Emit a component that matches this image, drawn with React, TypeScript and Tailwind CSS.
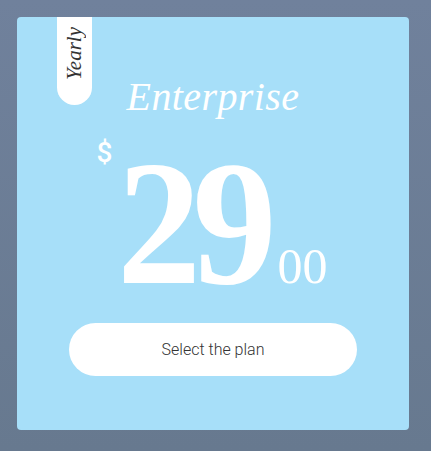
import React from "react";

export default function App() {
  return (
    <div className="w-[431px] h-[451px] overflow-hidden bg-gradient-to-b from-[#70819c] to-[#67798f] pt-[17px] pl-[17px]">
      <div className="relative w-[392px] h-[413px] rounded-[4px] bg-[#a7dff9] flex flex-col items-center">
        <div className="absolute left-[40px] top-0 w-[35px] h-[88px] bg-white rounded-b-full flex items-start justify-center">
          <span className="block mt-[10px] italic text-[21px] leading-none text-[#333] [writing-mode:vertical-rl] rotate-180 font-['Liberation_Serif',serif]">
            Yearly
          </span>
        </div>
        <div className="mt-[60px] h-[40px] text-[40px] leading-none italic text-white tracking-[0.4px] font-['Liberation_Serif',serif]">
          Enterprise
        </div>
        <div className="mt-[18px] -ml-[2px] flex items-start text-white">
          <span className="mt-[4px] mr-[5px] text-[28px] leading-none font-medium font-['Roboto','Liberation_Sans',sans-serif]">
            $
          </span>
          <div className="flex items-baseline">
            <span className="inline-block origin-left scale-x-[0.95] -mr-[8px] text-[177px] leading-none font-bold tracking-[-9px] font-['Liberation_Serif',serif]">
              29
            </span>
            <span className="ml-[9px] text-[50px] leading-none font-['Liberation_Serif',serif]">
              00
            </span>
          </div>
        </div>
        <button className="mt-[11px] w-[288px] h-[53px] rounded-full bg-white text-[16px] font-light text-[#333] font-['Roboto','Liberation_Sans',sans-serif]">
          Select the plan
        </button>
      </div>
    </div>
  );
}
